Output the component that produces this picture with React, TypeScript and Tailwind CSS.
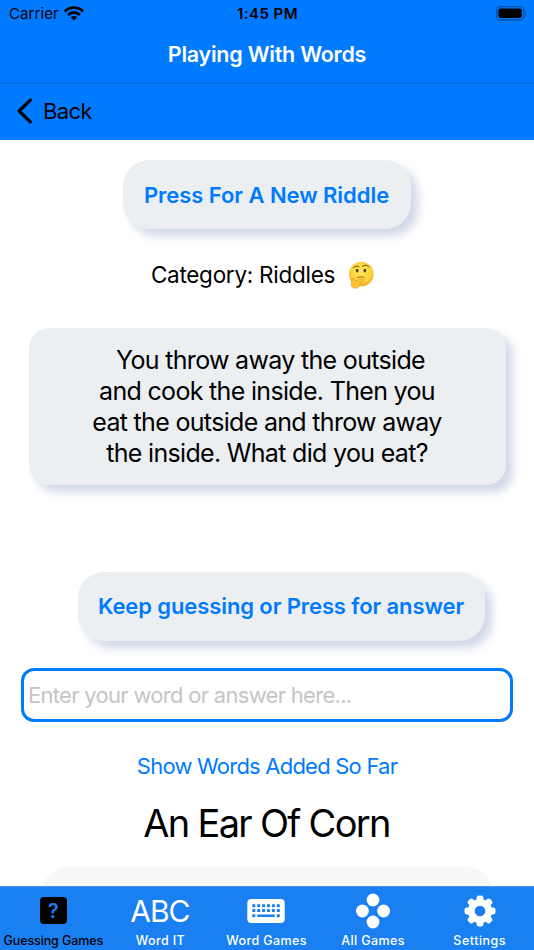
import type { ReactNode } from "react";

interface Tab {
  label: string;
  icon: ReactNode;
  active?: boolean;
  labelClass: string;
}

function WifiIcon() {
  return (
    <svg width="20" height="16" viewBox="0 0 20 16" fill="none" stroke="#000" strokeWidth="2.8">
      <path d="M.8 5.4a13 13 0 0 1 18.4 0" />
      <path d="M4.1 8.9a8.4 8.4 0 0 1 11.8 0" />
      <path d="M10 14.6 6.9 11.4a4.4 4.4 0 0 1 6.2 0z" fill="#000" stroke="none" />
    </svg>
  );
}

function BatteryIcon() {
  return (
    <svg width="32" height="16" viewBox="0 0 32 16">
      <rect x="0.6" y="0.6" width="27.4" height="13.4" rx="4" fill="none" stroke="#0050a8" strokeWidth="1.3" />
      <rect x="2.4" y="2.5" width="23.4" height="9.4" rx="2.2" fill="#000" />
      <path d="M29.4 5.2c1.5.5 1.5 4.1 0 4.6z" fill="#0050a8" />
    </svg>
  );
}

function ThinkingEmoji() {
  return (
    <svg width="26" height="28" viewBox="0 0 26 28">
      <defs>
        <radialGradient id="face" cx="0.5" cy="0.4" r="0.6">
          <stop offset="0" stopColor="#ffe95a" />
          <stop offset="0.7" stopColor="#fdd23c" />
          <stop offset="1" stopColor="#f2a321" />
        </radialGradient>
      </defs>
      <circle cx="13.3" cy="13" r="12.3" fill="url(#face)" />
      <ellipse cx="9.2" cy="9.6" rx="1.3" ry="1.9" fill="#5a3210" />
      <ellipse cx="16.8" cy="9.6" rx="1.3" ry="1.9" fill="#5a3210" />
      <path d="M5.6 6.6c1.4-1.4 3.6-1.7 5.3-.9M14.6 5.4c2-1.6 4.8-1.6 6.5.4" fill="none" stroke="#75430f" strokeWidth="1" strokeLinecap="round" />
      <path d="M9.5 16.6c2.2-1.2 4.5-1 6.6-.1" fill="none" stroke="#8f5612" strokeWidth="0.9" strokeLinecap="round" />
      <path
        d="M4.6 17.4c.9-1 2.2-.3 2.2 1v1.3c2.5-.5 5-1.5 7.7-1.5 1.4.1 1.4 1.9.1 2.2l-3 .7c1 .9.8 2-.1 2.6-.1 1.5-1 3-3.1 3.4-2.6.5-4.9-.6-5-3.5-.1-2.3.1-5.1 1.2-6.2z"
        fill="#fcc331"
        stroke="#e39a20"
        strokeWidth="0.6"
      />
    </svg>
  );
}

function QuestionIcon() {
  return (
    <span className="flex h-[27px] w-[27px] items-center justify-center rounded-[4px] bg-black text-[20px] font-semibold leading-none text-[#1a80f2]">
      ?
    </span>
  );
}

function KeyboardIcon() {
  const columns = [0, 1, 2, 3, 4, 5];
  return (
    <svg width="38" height="24" viewBox="0 0 38 24" fill="#1a80f2">
      <rect x="0.3" width="37.4" height="24" rx="4" fill="#fff" />
      {columns.map((c) => (
        <g key={c}>
          <rect x={5.3 + c * 4.9} y="5.2" width="3" height="3" rx="0.4" />
          <rect x={5.3 + c * 4.9} y="10.1" width="3" height="3" rx="0.4" />
        </g>
      ))}
      <rect x="5.3" y="15.2" width="3" height="3" rx="0.4" />
      <rect x="10.2" y="15.4" width="17.6" height="2.5" rx="0.4" />
      <rect x="29.8" y="15.2" width="3" height="3" rx="0.4" />
    </svg>
  );
}

function CirclesIcon() {
  return (
    <svg width="34" height="36" viewBox="0 0 34 36" fill="#fff">
      <circle cx="17" cy="7" r="6.4" />
      <circle cx="6.4" cy="18" r="6.4" />
      <circle cx="27.6" cy="18" r="6.4" />
      <circle cx="17" cy="29" r="6.4" />
    </svg>
  );
}

function GearIcon() {
  const teeth = [0, 45, 90, 135];
  return (
    <svg width="32" height="32" viewBox="0 0 32 32" fill="#fff">
      {teeth.map((angle) => (
        <rect key={angle} x="12.6" y="0.4" width="6.8" height="31.2" rx="2.4" transform={`rotate(${angle} 16 16)`} />
      ))}
      <circle cx="16" cy="16" r="12.1" />
      <circle cx="16" cy="16" r="5.3" fill="#1a80f2" />
    </svg>
  );
}

const tabs: Tab[] = [
  { label: "Guessing Games", icon: <QuestionIcon />, active: true, labelClass: "tracking-[-0.1px]" },
  {
    label: "Word IT",
    icon: <span className="text-[30px] leading-none tracking-[-1px]">ABC</span>,
    labelClass: "pl-px tracking-[0.4px]",
  },
  { label: "Word Games", icon: <KeyboardIcon />, labelClass: "tracking-[0.4px]" },
  { label: "All Games", icon: <CirclesIcon />, labelClass: "tracking-[0.4px]" },
  { label: "Settings", icon: <GearIcon />, labelClass: "tracking-[0.5px]" },
];

const riddle = [
  "You throw away the outside",
  "and cook the inside. Then you",
  "eat the outside and throw away",
  "the inside. What did you eat?",
];

export default function App() {
  return (
    <div className="flex h-[950px] w-[534px] flex-col overflow-hidden bg-white font-['Inter',sans-serif] text-black">
      <header className="h-[140px] shrink-0 bg-[#007aff]">
        {/* Status bar */}
        <div className="grid h-7 grid-cols-3 items-center pl-[9px] pr-[6px] text-[15px]">
          <div className="flex items-center gap-[5px]">
            <span className="tracking-[0.1px]">Carrier</span>
            <WifiIcon />
          </div>
          <span className="pr-[2px] text-center font-semibold tracking-[0.45px]">1:45 PM</span>
          <div className="flex justify-end">
            <BatteryIcon />
          </div>
        </div>
        <h1 className="flex h-[56px] items-center justify-center border-b-2 border-[#0070ea] pb-px text-[21.5px] font-semibold tracking-[-0.25px] text-white">
          Playing With Words
        </h1>
        <button className="flex h-[54px] items-center gap-[10px] pl-[17px] text-[22px] tracking-[-0.6px]">
          <svg width="16" height="26" viewBox="0 0 16 26" fill="none" stroke="#000" strokeWidth="3.2" strokeLinecap="round" strokeLinejoin="round">
            <path d="M13.3 2.2 2.2 13l11.1 10.8" />
          </svg>
          Back
        </button>
      </header>

      <main className="flex min-h-0 flex-1 flex-col items-center overflow-hidden">
        <button className="mt-5 h-[69px] w-[288px] shrink-0 rounded-[26px] bg-[#ebeff2] pr-px pt-px text-[22px] font-semibold tracking-[-0.05px] text-[#007aff] shadow-[7px_7px_10px_#d0d8e8]">
          Press For A New Riddle
        </button>

        <div className="mr-[9px] mt-[32px] flex h-7 shrink-0 items-center gap-[13px] text-[22.5px] tracking-[-0.27px]">
          <span>Category: Riddles</span>
          <ThinkingEmoji />
        </div>

        <div className="mt-[39px] flex h-[157px] w-[477px] shrink-0 flex-col items-center justify-center rounded-[20px] bg-[#ebeff2] text-[25px] leading-[31px] tracking-[-0.68px] shadow-[7px_7px_10px_#d0d8e8]">
          {riddle.map((line, i) => (
            <span key={line} className={i === 0 ? "pl-[7px]" : ""}>
              {line}
            </span>
          ))}
        </div>

        <button className="ml-[29px] mt-[87px] h-[69px] w-[407px] shrink-0 rounded-[26px] bg-[#ebeff2] pr-px text-[22px] font-semibold tracking-[-0.1px] text-[#007aff] shadow-[7px_7px_10px_#d0d8e8]">
          Keep guessing or Press for answer
        </button>

        <input
          className="mt-[27px] h-[54px] w-[492px] shrink-0 rounded-[13px] border-3 border-[#007aff] px-1 text-[22px] tracking-[-0.7px] placeholder:text-[#c5c5c7]"
          placeholder="Enter your word or answer here..."
        />

        <button className="mt-[28px] h-[30px] shrink-0 text-[22px] tracking-[-0.78px] text-[#007aff]">Show Words Added So Far</button>
        <p className="mr-px mt-[19px] h-[48px] shrink-0 text-[38px] leading-[48px] tracking-[-1.7px]">An Ear Of Corn</p>
        <div className="mt-[20px] h-[80px] w-[450px] shrink-0 rounded-[26px] bg-[#f7f7f7]" />
      </main>

      <nav className="grid h-16 shrink-0 grid-cols-5 border-t border-[#4a94e8] bg-[#1a80f2] pr-px">
        {tabs.map((tab) => (
          <button key={tab.label} className={`flex flex-col items-center whitespace-nowrap ${tab.active ? "text-black" : "text-white"}`}>
            <span className="flex h-[47px] items-center justify-center">{tab.icon}</span>
            <span className={`text-[12.5px] font-medium leading-[13px] ${tab.labelClass}`}>{tab.label}</span>
          </button>
        ))}
      </nav>
    </div>
  );
}
